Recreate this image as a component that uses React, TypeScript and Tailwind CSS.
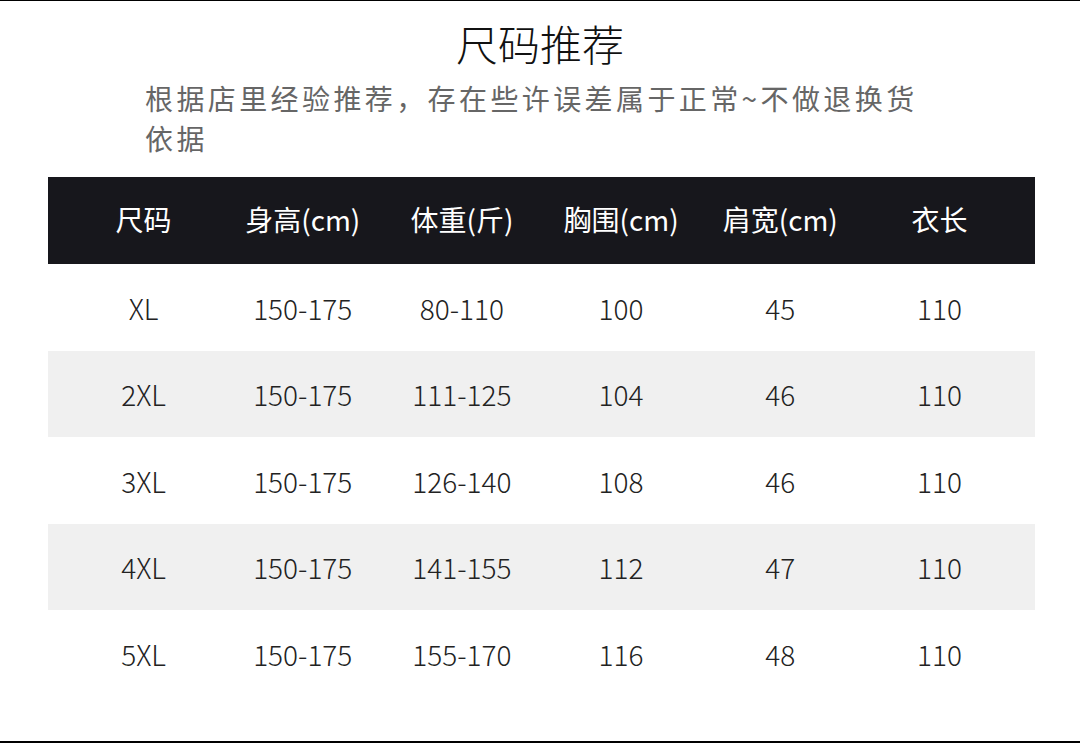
import type { ReactNode } from "react";

const cabecalho = ["尺码", "身高(cm)", "体重(斤)", "胸围(cm)", "肩宽(cm)", "衣长"];

const linhas = [
  ["XL", "150-175", "80-110", "100", "45", "110"],
  ["2XL", "150-175", "111-125", "104", "46", "110"],
  ["3XL", "150-175", "126-140", "108", "46", "110"],
  ["4XL", "150-175", "141-155", "112", "47", "110"],
  ["5XL", "150-175", "155-170", "116", "48", "110"],
];

const alturas = ["h-[87px]", "h-[86px]", "h-[87px]", "h-[86px]", "h-[87px]"];

function Linha({ className, children }: { className?: string; children: ReactNode }) {
  return <div className={`grid grid-cols-6 items-center px-4 ${className ?? ""}`}>{children}</div>;
}

export default function App() {
  return (
    <div
      className="flex h-[743px] w-[1080px] flex-col border-t border-b-2 border-black bg-white"
      style={{ fontFamily: '"Noto Sans CJK SC", "Noto Sans", sans-serif' }}
    >
      <h1 className="pt-[17px] text-center text-[42px] leading-[50px] font-light text-[#111]">尺码推荐</h1>
      <p className="mt-[10px] w-[945px] pl-[145px] text-[28px] leading-[40px] tracking-[3.4px] text-[#666]">
        根据店里经验推荐，存在些许误差属于正常~不做退换货依据
      </p>

      <div className="ml-[48px] mt-[19px] w-[987px]">
        <Linha className="h-[87px] bg-[#17171c] pb-[3px] text-white">
          {cabecalho.map((c) => (
            <span key={c} className="text-center text-[28px]">
              {c}
            </span>
          ))}
        </Linha>
        {linhas.map((l, i) => (
          <Linha key={l[0]} className={`${alturas[i]} ${i % 2 === 1 ? "bg-[#f0f0f0]" : "bg-white"} text-[#222]`}>
            {l.map((v, j) => (
              <span key={j} className="text-center text-[28px] font-light">
                {v}
              </span>
            ))}
          </Linha>
        ))}
      </div>
    </div>
  );
}
